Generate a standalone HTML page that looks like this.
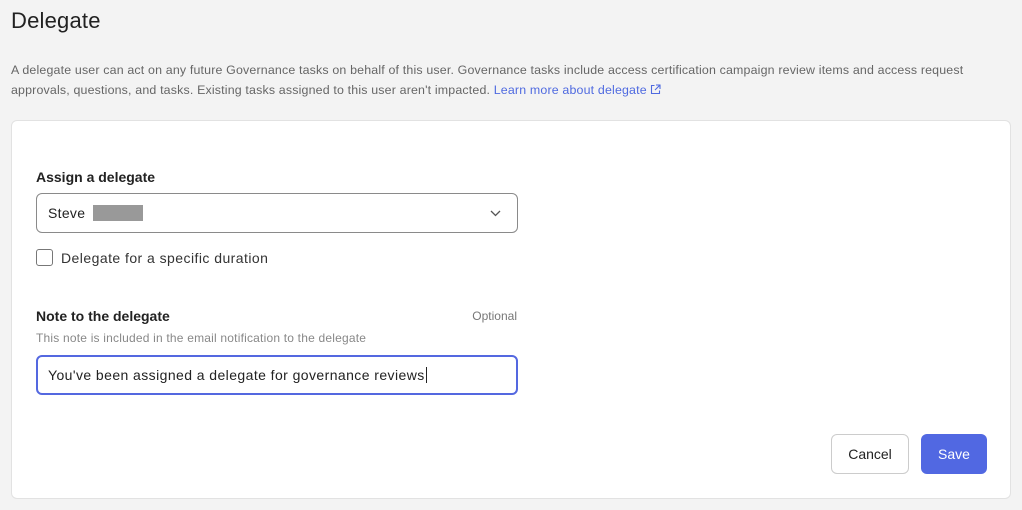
<!DOCTYPE html>
<html><head><meta charset="utf-8"><style>
*{box-sizing:border-box;margin:0;padding:0}
body{width:1022px;height:510px;background:#f3f3f3;font-family:"Liberation Sans",sans-serif;color:#222;position:relative;overflow:hidden}
h1{position:absolute;left:11px;top:8px;font-size:22px;font-weight:400;color:#222;letter-spacing:0.2px}
.desc{position:absolute;left:11px;top:60px;width:975px;font-size:12.4px;line-height:20px;color:#666;letter-spacing:0.17px}
.desc a{color:#4f6ae0;text-decoration:none}
.card{position:absolute;left:11px;top:120px;width:1000px;height:379px;background:#fff;border:1px solid #e2e2e2;border-radius:6px}
.lbl{position:absolute;font-size:14px;font-weight:700;color:#222}
.sel{position:absolute;left:24px;top:72px;width:482px;height:40px;border:1px solid #8a8a8a;border-radius:6px;font-size:14px;padding:11px 11px;letter-spacing:0.3px}
.red{display:inline-block;width:50px;height:16px;background:#999;vertical-align:-3px;margin-left:3px}
.cb{position:absolute;left:24px;top:128px;width:17px;height:17px;border:1px solid #777;border-radius:3px}
.inp{position:absolute;left:24px;top:234px;width:482px;height:40px;border:2px solid #5468e0;border-radius:6px;font-size:14px;padding:10px 10px;color:#222;letter-spacing:0.42px}
.btn{position:absolute;top:313px;height:40px;border-radius:6px;font-size:14px;text-align:center;line-height:38px}
</style></head><body>
<h1>Delegate</h1>
<div class="desc">A delegate user can act on any future Governance tasks on behalf of this user. Governance tasks include access certification campaign review items and access request approvals, questions, and tasks. Existing tasks assigned to this user aren't impacted. <a>Learn more about delegate <svg width="11" height="11" viewBox="0 0 11 11" style="vertical-align:-1px"><path d="M4.5 1.5H1.5v8h8v-3M6 1h4v4M10 1L5 6" fill="none" stroke="#4f6ae0" stroke-width="1.1"/></svg></a></div>
<div class="card">
<div class="lbl" style="left:24px;top:48px">Assign a delegate</div>
<div class="sel">Steve <span class="red"></span>
<svg style="position:absolute;right:16px;top:16px" width="11" height="7" viewBox="0 0 11 7"><path d="M1 1l4.5 4.5L10 1" fill="none" stroke="#555" stroke-width="1.3"/></svg></div>
<div class="cb"></div>
<div style="position:absolute;left:49px;top:129px;font-size:14px;color:#333;letter-spacing:0.45px">Delegate for a specific duration</div>
<div class="lbl" style="left:24px;top:187px">Note to the delegate</div>
<div style="position:absolute;right:493px;top:188px;font-size:12px;color:#777">Optional</div>
<div style="position:absolute;left:24px;top:210px;font-size:12px;color:#888;letter-spacing:0.2px">This note is included in the email notification to the delegate</div>
<div class="inp">You've been assigned a delegate for governance reviews<span style="border-left:1px solid #222;margin-left:1px"></span></div>
<div class="btn" style="left:819px;width:78px;border:1px solid #ccc;background:#fff;color:#222">Cancel</div>
<div class="btn" style="left:909px;width:66px;background:#5168e2;color:#fff;line-height:40px">Save</div>
</div>
</body></html>
